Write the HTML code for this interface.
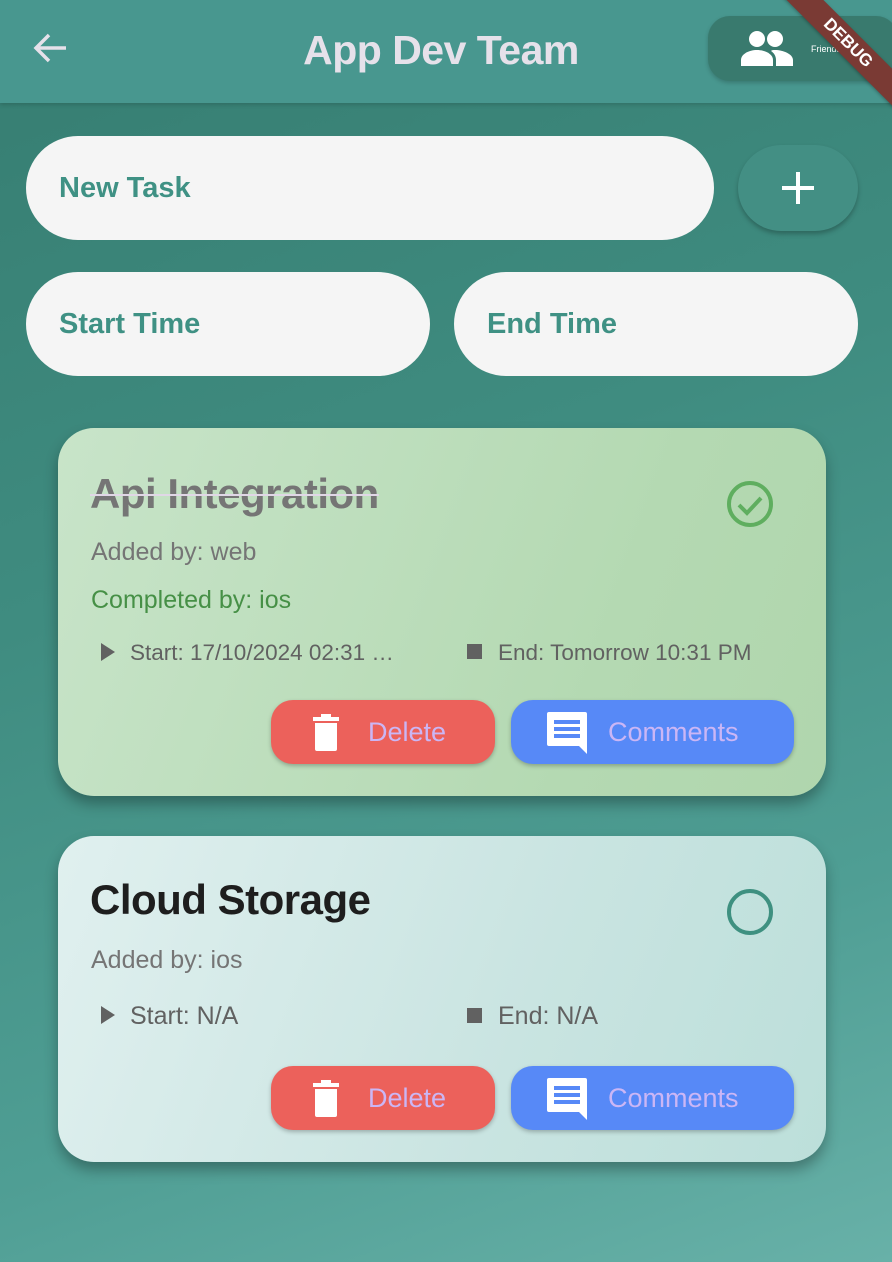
<!DOCTYPE html>
<html><head><meta charset="utf-8"><style>
*{margin:0;padding:0;box-sizing:border-box}
body{width:892px;height:1262px;overflow:hidden;font-family:"Liberation Sans",sans-serif;background:linear-gradient(160deg,#367d71 0%,#3f8c80 40%,#4f9e94 75%,#68b1a8 100%);position:relative}
.a{position:absolute}
.bar{left:0;top:0;width:892px;height:103px;background:#48978f;box-shadow:0 2px 4px rgba(0,0,0,.15)}
.title{left:0;width:882px;top:27px;text-align:center;font-size:41px;font-weight:bold;color:#e6e1ea;letter-spacing:-0.5px}
.fr{left:708px;top:16px;width:190px;height:65px;border-radius:22px;background:#397a6e;box-shadow:0 2px 4px rgba(0,0,0,.2)}
.pill{background:#f5f5f5;border-radius:52px;height:104px}
.pt{font-size:29px;font-weight:bold;color:#3f9184;position:absolute;top:36px}
.card{left:58px;width:768px;border-radius:36px;box-shadow:0 8px 14px rgba(0,0,0,.3)}
.btn{position:absolute;height:64px;border-radius:22px;box-shadow:0 2px 4px rgba(0,0,0,.25);font-size:27px;color:#cbb6f5}
.btn span{position:absolute;top:17px}
.meta{font-size:22px;color:#616161;position:absolute}
</style></head><body>
<div class="a bar"></div>
<svg class="a" style="left:32px;top:32px" width="36" height="32" viewBox="0 0 36 32"><path d="M34 16H5M17 3L4 16l13 13" stroke="#e6e1ea" stroke-width="3.5" fill="none"/></svg>
<div class="a title">App Dev Team</div>
<div class="a fr"></div>
<svg class="a" style="left:740px;top:30px" width="54" height="36" viewBox="0 0 54 36"><circle cx="17" cy="9" r="8" fill="#fff"/><circle cx="35" cy="9" r="8" fill="#fff"/><path d="M1 36v-6c0-6 8-10 16-10s16 4 16 10v6z" fill="#fff"/><path d="M35 20c8 0 18 4 18 10v6H36v-6c0-4-2-7-5-9 1-1 2-1 4-1z" fill="#fff"/></svg>
<div class="a" style="left:811px;top:44px;font-size:9px;color:#fff">Friends</div>
<div class="a" style="left:758px;top:30px;width:180px;height:26px;background:#7a3a34;transform:rotate(45deg);transform-origin:center;color:#fff;font-weight:bold;font-size:17px;text-align:center;line-height:26px;box-shadow:0 1px 3px rgba(0,0,0,.3)">DEBUG</div>

<div class="a pill" style="left:26px;top:136px;width:688px"><span class="pt" style="left:33px">New Task</span></div>
<div class="a" style="left:738px;top:145px;width:120px;height:86px;border-radius:43px;background:#438f84;box-shadow:0 3px 5px rgba(0,0,0,.25)"></div>
<svg class="a" style="left:780px;top:170px" width="36" height="36"><path d="M18 2v32M2 18h32" stroke="#fff" stroke-width="4"/></svg>
<div class="a pill" style="left:26px;top:272px;width:404px"><span class="pt" style="left:33px">Start Time</span></div>
<div class="a pill" style="left:454px;top:272px;width:404px"><span class="pt" style="left:33px">End Time</span></div>

<div class="a card" style="top:428px;height:368px;background:linear-gradient(110deg,#c8e4c9,#b4d9b2 70%,#b0d6ad)">
 <div class="a" style="left:32px;top:42px;font-size:42px;font-weight:bold;color:#757575;letter-spacing:-0.5px;text-decoration:line-through;text-decoration-color:#e0d7e6;text-decoration-thickness:2px">Api Integration</div>
 <svg class="a" style="left:668px;top:52px" width="48" height="48" viewBox="0 0 48 48"><circle cx="24" cy="24" r="21" stroke="#5fae5f" stroke-width="4" fill="none"/><path d="M13 25l8 8 14-15" stroke="#5fae5f" stroke-width="4" fill="none"/></svg>
 <div class="a" style="left:33px;top:110px;font-size:25px;color:#757575">Added by: web</div>
 <div class="a" style="left:33px;top:158px;font-size:25px;color:#469046">Completed by: ios</div>
 <svg class="a" style="left:43px;top:215px" width="14" height="18"><path d="M0 0l14 9-14 9z" fill="#616161"/></svg>
 <div class="meta" style="left:72px;top:212px;font-size:22.5px">Start: 17/10/2024 02:31 …</div>
 <div class="a" style="left:409px;top:216px;width:15px;height:15px;background:#616161"></div>
 <div class="meta" style="left:440px;top:212px;font-size:22.5px">End: Tomorrow 10:31 PM</div>
 <div class="btn" style="left:213px;top:272px;width:224px;background:#ec615b">
  <svg class="a" style="left:40px;top:13px" width="30" height="38" viewBox="0 0 30 38"><path d="M2 4h26v4H2zM10 1h10v4H10zM4 10h22v26a2 2 0 0 1-2 2H6a2 2 0 0 1-2-2z" fill="#fff"/></svg>
  <span style="left:97px">Delete</span></div>
 <div class="btn" style="left:453px;top:272px;width:283px;background:#5789f7">
  <svg class="a" style="left:35px;top:12px" width="42" height="42" viewBox="0 0 42 42"><path d="M1 2a2 2 0 0 1 2-2h36a2 2 0 0 1 2 2v40l-8-8H3a2 2 0 0 1-2-2z" fill="#fff"/><path d="M8 10h26M8 17h26M8 24h26" stroke="#5789f7" stroke-width="4"/></svg>
  <span style="left:97px">Comments</span></div>
</div>

<div class="a card" style="top:836px;height:326px;background:linear-gradient(110deg,#e0f0ef,#c9e4e1 60%,#bcdfda)">
 <div class="a" style="left:32px;top:40px;font-size:42px;font-weight:bold;color:#1e1e1e;letter-spacing:-0.5px">Cloud Storage</div>
 <svg class="a" style="left:668px;top:52px" width="48" height="48" viewBox="0 0 48 48"><circle cx="24" cy="24" r="21" stroke="#3e9080" stroke-width="4" fill="none"/></svg>
 <div class="a" style="left:33px;top:110px;font-size:25px;color:#757575">Added by: ios</div>
 <svg class="a" style="left:43px;top:170px" width="14" height="18"><path d="M0 0l14 9-14 9z" fill="#616161"/></svg>
 <div class="meta" style="left:72px;top:166px;font-size:25px">Start: N/A</div>
 <div class="a" style="left:409px;top:172px;width:15px;height:15px;background:#616161"></div>
 <div class="meta" style="left:440px;top:166px;font-size:25px">End: N/A</div>
 <div class="btn" style="left:213px;top:230px;width:224px;background:#ec615b">
  <svg class="a" style="left:40px;top:13px" width="30" height="38" viewBox="0 0 30 38"><path d="M2 4h26v4H2zM10 1h10v4H10zM4 10h22v26a2 2 0 0 1-2 2H6a2 2 0 0 1-2-2z" fill="#fff"/></svg>
  <span style="left:97px">Delete</span></div>
 <div class="btn" style="left:453px;top:230px;width:283px;background:#5789f7">
  <svg class="a" style="left:35px;top:12px" width="42" height="42" viewBox="0 0 42 42"><path d="M1 2a2 2 0 0 1 2-2h36a2 2 0 0 1 2 2v40l-8-8H3a2 2 0 0 1-2-2z" fill="#fff"/><path d="M8 10h26M8 17h26M8 24h26" stroke="#5789f7" stroke-width="4"/></svg>
  <span style="left:97px">Comments</span></div>
</div>
</body></html>
